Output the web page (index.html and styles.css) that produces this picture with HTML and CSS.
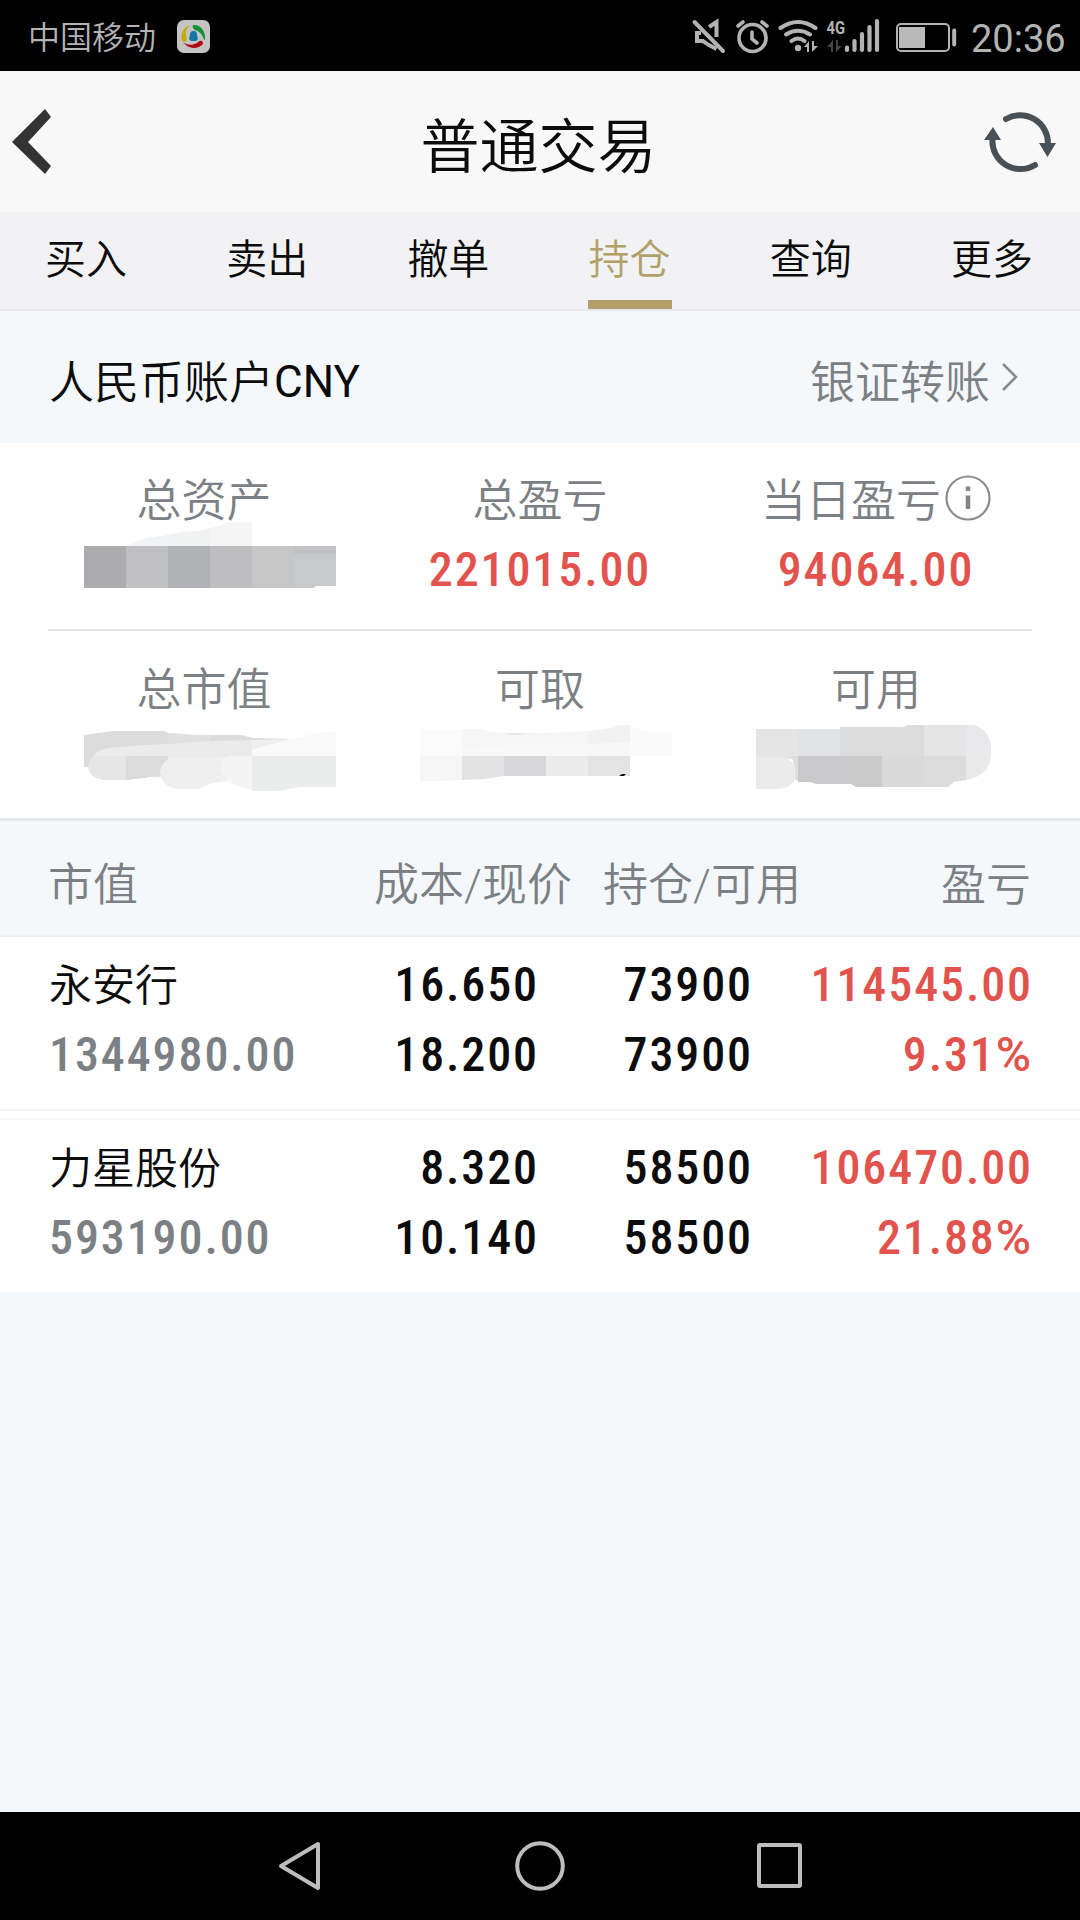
FILE: index.html
```html
<!DOCTYPE html>
<html lang="zh">
<head>
  <meta charset="UTF-8" />
  <title>普通交易</title>
  <link rel="stylesheet" href="styles.css">
</head>
<body>
  <!-- 状态栏 -->
  <div class="status-bar">
    <span class="carrier">中国移动</span>
    <svg class="app-icon" width="33" height="33" viewBox="0 0 33 33">
      <rect width="33" height="33" rx="7" fill="#c4c4c4" />
      <path d="M14 5C7 6 3 13 5 21C9 23 11 20 9 16C8 11 10 7 14 5Z" fill="#c9a800" />
      <path d="M16 5C24 4 29 12 28 20C26 20 26 12 18 10C16 9 15 7 16 5Z" fill="#17903a" />
      <path d="M6 22C11 29 20 30 26 24C26 20 23 20 20 23C15 26 10 25 6 22Z" fill="#b5000f" />
      <path d="M16.500 11C13.500 11 13 13.500 13 15L12 19L13 20L14 21H19L21 19L20 15C20 13 19.500 11 16.500 11Z" fill="#1477a8" />
    </svg>
    <svg class="status-icons" width="270" height="40" viewBox="690 16 270 40" fill="none" stroke="#b3b3b3">
      <!-- 静音 -->
      <g stroke-width="4">
        <path d="M694.500 22L723 51" stroke-linecap="round" />
        <path d="M709 27L716.500 22V37M707 44L703 41H697V33H701M707 44L716.500 49" />
      </g>
      <!-- 闹钟 -->
      <g stroke-width="3.600" stroke-linecap="round">
        <circle cx="752.500" cy="38" r="13.500" />
        <path d="M752 32V39L757 43M738 26L743 22M767 26L762 22" />
      </g>
      <!-- WiFi -->
      <g stroke-width="4" stroke-linecap="round">
        <path d="M780.500 28Q798 16 815.500 28M786 34.500Q798 27 810 34.500M791.500 41Q798 36 804.500 41" />
        <circle cx="798" cy="48" r="3.200" fill="#b3b3b3" stroke="none" />
      </g>
      <path d="M804 47L809 41V52H807V47ZM818 46L812 52V41H814V46Z" fill="#b3b3b3" stroke="none" />
      <!-- 信号 -->
      <path d="M827 47L833 40V52H831V47ZM842 46L836 52V40H838V46Z" fill="#444" stroke="none" />
      <path d="M847 47.500V50M854.500 41V50M862 34V50M869.500 27V50M877 21V50" stroke-width="4.200" stroke-linecap="round" />
      <text class="net-type" x="826.500" y="34" textLength="18.500" lengthAdjust="spacingAndGlyphs">4G</text>
      <!-- 电池 -->
      <rect x="897" y="24" width="52" height="27" rx="4" stroke-width="2" />
      <rect x="899" y="27" width="26" height="21" fill="#b9b9b9" stroke="none" />
      <path d="M954.200 30.500V44.500" stroke-width="4" stroke-linecap="round" />
    </svg>
    <span class="clock">20:36</span>
  </div>

  <div class="header">
    <svg class="back" width="40" height="66" viewBox="0 0 40 66">
      <path d="M33 0L39 8L16 33L39 57L33 65L0 33Z" fill="#333" />
    </svg>
    <h1>普通交易</h1>
    <svg class="refresh" width="74" height="64" viewBox="983 110 74 64">
      <path d="M1006 119A28 28 0 0 1 1048 144M1035 165A28 28 0 0 1 992.500 139" fill="none" stroke="#485158" stroke-width="6" stroke-linecap="round" />
      <path d="M1039 143H1056L1047.500 157ZM984 140H1001L993 127Z" fill="#485158" />
    </svg>
  </div>

  <div class="tabs">
    <a class="tab">买入</a>
    <a class="tab">卖出</a>
    <a class="tab">撤单</a>
    <a class="tab active">持仓</a>
    <a class="tab">查询</a>
    <a class="tab">更多</a>
  </div>

  <div class="account">
    <span class="account-name">人民币账户<span class="currency">CNY</span></span>
    <a class="transfer">银证转账
      <svg width="17" height="30" viewBox="0 0 17 30">
        <path d="M2 2L15 15L2 28" fill="none" stroke="#858b90" stroke-width="2.500" />
      </svg>
    </a>
  </div>

  <!-- 资产汇总 -->
  <div class="summary first">
    <div class="item">
      <div class="label">总资产</div>
      <svg class="mosaic" width="264" height="70" viewBox="-12 0 264 70">
        <path d="M42 12L62 4L84 1V12Z" fill="#f1f4f4" />
        <path d="M84 1L98 -2L115 -3L126 -6V12H84Z" fill="#f0f1f1" />
        <path d="M126 -6L136 -8L142 -12H168V12H126Z" fill="#f5f5f5" />
        <rect x="0" y="12" width="42" height="42" fill="#acacae" />
        <rect x="42" y="12" width="42" height="42" fill="#c0c0c2" />
        <rect x="84" y="12" width="42" height="42" fill="#b1b2b5" />
        <rect x="126" y="12" width="42" height="42" fill="#bebec0" />
        <rect x="168" y="12" width="42" height="42" fill="#c6c6c6" />
        <path d="M210 12H252V52H232L230 54H210Z" fill="#c8c9cd" />
        <rect x="210" y="12" width="42" height="8" fill="#c0c1c5" />
      </svg>
    </div>
    <div class="item">
      <div class="label">总盈亏</div>
      <div class="num red">221015.00</div>
    </div>
    <div class="item">
      <div class="label">当日盈亏<svg class="info" width="46" height="46" viewBox="0 0 46 46">
          <circle cx="23" cy="23" r="21.500" fill="none" stroke="#8c8c8c" stroke-width="2.200" />
          <path d="M23 11.500V16M23 20.500V34" stroke="#858585" stroke-width="4.500" />
        </svg></div>
      <div class="num red">94064.00</div>
    </div>
  </div>
  <div class="summary second">
    <div class="item">
      <div class="label">总市值</div>
      <svg class="mosaic" width="264" height="70" viewBox="-12 0 264 70">
        <path d="M0 12L28 8H80L84 10L110 12H158L168 15L205 16V33H84V53L66 54L42 57V44H0Z" fill="#dcdcdd" />
        <path d="M84 10L110 12H126V33H84Z" fill="#e0e0e1" />
        <path d="M5 44Q7 27 25 25L60 22L84 21L126 18L168 17V33L5 44Z" fill="#ebebec" />
        <path d="M168 26L205 16L226 12L234 10L252 8V33H168Z" fill="#f9f9f9" />
        <path d="M168 17L205 16L168 26Z" fill="#efefef" />
        <path d="M4 45Q5 35 10 33H42V57H18Q6 54 4 45Z" fill="#e6e6e6" />
        <path d="M42 33H84V53L66 54L42 57Z" fill="#dbdbdb" />
        <path d="M76 50Q77 35 94 34H144V58L128 60L120 64Q116 66 110 66H92Q77 62 76 50Z" fill="#efefef" />
        <path d="M136 45Q138 34 145 33H168V67Q140 62 136 45Z" fill="#f4f4f4" />
        <path d="M168 33H252V64H216L194 68H168Z" fill="#ebecec" />
      </svg>
    </div>
    <div class="item">
      <div class="label">可取</div>
      <svg class="mosaic" width="264" height="70" viewBox="-12 0 264 70">
        <path d="M0 6H42V33H0Z" fill="#fbfbfb" />
        <path d="M42 6H60L72 9L84 10H126L168 8V33H42Z" fill="#f6f6f6" />
        <path d="M84 10H110L100 12H90Z" fill="#e9e9e9" />
        <path d="M168 8L190 5L200 2H210V33H168Z" fill="#f2f2f2" />
        <path d="M210 3Q219 4 221 8H252V33H210Z" fill="#fafafa" />
        <path d="M0 26L70 23L168 21L210 19V33H0Z" fill="#fafafa" opacity=".7" />
        <path d="M0 33H42V57L20 58H0Z" fill="#f6f6f6" />
        <path d="M42 33H84V53L64 56L42 57Z" fill="#e3e3e3" />
        <rect x="84" y="33" width="42" height="20" fill="#d7d7da" />
        <rect x="126" y="33" width="42" height="20" fill="#ececec" />
        <rect x="168" y="33" width="42" height="20" fill="#e4e4e4" />
        <path d="M202 51H206L204 53H199Z" fill="#111" />
      </svg>
    </div>
    <div class="item">
      <div class="label">可用</div>
      <svg class="mosaic" width="264" height="70" viewBox="-12 0 264 70">
        <rect x="0" y="6" width="42" height="30" fill="#e5e5e5" />
        <rect x="42" y="6" width="42" height="27" fill="#e2e3e5" />
        <path d="M84 4H147L152 2H168V33H84Z" fill="#dcdcdc" />
        <rect x="168" y="2" width="42" height="31" fill="#e5e5e5" />
        <path d="M210 2H217Q232 5 235 22V33H210Z" fill="#e9e9eb" />
        <path d="M0 34H26Q40 37 40 50Q39 64 24 66H0Z" fill="#ebebeb" />
        <path d="M34 33H42V58L39 57Q41 42 34 33Z" fill="#dedede" />
        <path d="M42 33H84V61H60L54 59H42Z" fill="#c9c9cb" />
        <path d="M84 33H126V64H100L95 61H84Z" fill="#cacaca" />
        <rect x="126" y="33" width="42" height="31" fill="#dadada" />
        <path d="M168 33H210V57L198 59L192 64H168Z" fill="#dcdcdc" />
        <path d="M210 33H235Q233 53 210 57Z" fill="#e9e9e9" />
      </svg>
    </div>
  </div>

  <!-- 持仓列表 -->
  <div class="list-head">
    <span>市值</span>
    <span>成本/现价</span>
    <span>持仓/可用</span>
    <span>盈亏</span>
  </div>
  <div class="stock">
    <div class="name">永安行</div>
    <div class="num">16.650</div>
    <div class="num">73900</div>
    <div class="num red">114545.00</div>
    <div class="num gray">1344980.00</div>
    <div class="num">18.200</div>
    <div class="num">73900</div>
    <div class="num red">9.31<span class="percent">%</span></div>
  </div>
  <div class="gap"></div>
  <div class="stock">
    <div class="name">力星股份</div>
    <div class="num">8.320</div>
    <div class="num">58500</div>
    <div class="num red">106470.00</div>
    <div class="num gray">593190.00</div>
    <div class="num">10.140</div>
    <div class="num">58500</div>
    <div class="num red">21.88<span class="percent">%</span></div>
  </div>

  <!-- 导航键 -->
  <div class="nav-bar">
    <svg width="54" height="54" viewBox="0 0 54 54"><path d="M8 27L45 5V49Z" /></svg>
    <svg width="54" height="54" viewBox="0 0 54 54"><circle cx="27" cy="27" r="22.800" /></svg>
    <svg width="54" height="54" viewBox="0 0 54 54"><rect x="6" y="6" width="41" height="41" rx="1" /></svg>
  </div>
</body>
</html>
```
FILE: styles.css
```css
* {
  box-sizing: border-box;
}
body {
  margin: 0;
  width: 1080px;
  height: 1920px;
  display: flex;
  flex-direction: column;
  background: #f4f8fb;
  color: #0c0c0c;
  font-family: Roboto, "Noto Sans CJK SC", sans-serif;
  font-weight: 350;
  overflow: hidden;
}
svg {
  display: block;
  flex-shrink: 0;
}
.status-bar {
  height: 71px;
  padding: 0 12px 0 28px;
  display: flex;
  align-items: center;
  background: #000;
  color: #b3b3b3;
}
.carrier {
  font-size: 32px;
  line-height: 70px;
  padding-top: 4px;
}
.app-icon {
  margin-left: 21px;
  margin-top: 2px;
}
.status-icons {
  margin-left: auto;
}
.net-type {
  font-size: 19px;
  font-weight: 700;
  fill: #b3b3b3;
  stroke: none;
}
.clock {
  width: 97px;
  margin-left: 11px;
  font-size: 38px;
  font-weight: 400;
  line-height: 70px;
  padding-top: 6px;
}
.header {
  height: 141px;
  padding: 0 23px 0 12px;
  display: flex;
  align-items: center;
  justify-content: space-between;
  background: #f8f8f8;
}
.header h1 {
  margin: 0;
  padding: 12px 0 0 42px;
  font-size: 59px;
  font-weight: 350;
  line-height: 80px;
}
.tabs {
  height: 99px;
  padding: 0 46px 0 44px;
  display: flex;
  justify-content: space-between;
  background: #f2f2f4;
  border-bottom: 2px solid #e6e8ec;
}
.tab {
  width: 84px;
  height: 97px;
  font-size: 41px;
  line-height: 97px;
  text-align: center;
}
.tab.active {
  color: #b1a168;
  border-bottom: 9px solid #b1a168;
}
.account {
  height: 132px;
  padding: 4px 62px 0 49px;
  display: flex;
  align-items: center;
  justify-content: space-between;
  font-size: 45px;
}
.currency {
  font-size: 44px;
  font-weight: 400;
  vertical-align: 2px;
}
.transfer {
  display: flex;
  align-items: center;
  gap: 11px;
  color: #7b8084;
}
.transfer svg {
  margin-top: -4px;
}
.summary {
  padding: 0 36px;
  display: grid;
  grid-template-columns: repeat(3, 336px);
  background: #fff;
}
.summary.first {
  height: 188px;
  padding-top: 21px;
  background: linear-gradient(#e4e5e7, #e4e5e7) center bottom / 984px 2px no-repeat #fff;
}
.summary.second {
  height: 190px;
  padding-top: 22px;
  border-bottom: 3px solid #e5e7e9;
}
.item {
  display: flex;
  flex-direction: column;
  align-items: center;
}
.label {
  display: flex;
  align-items: center;
  height: 70px;
  font-size: 45px;
  line-height: 70px;
  padding-top: 5px;
  color: #7b8084;
}
.info {
  margin: -8px 0 0 4px;
}
.mosaic {
  overflow: visible;
}
.num {
  font-size: 48px;
  font-weight: 500;
  font-stretch: 85%;
  line-height: 72px;
  letter-spacing: 1.900px;
}
.red {
  color: #e2534d;
}
.gray {
  color: #7b8084;
}
.percent {
  font-stretch: 100%;
}
.list-head {
  height: 116px;
  padding-left: 48px;
  display: grid;
  grid-template-columns: 301px 223px 229px 230px;
  font-size: 45px;
  line-height: 130px;
  color: #7b8084;
  border-bottom: 2px solid #eef1f5;
  text-align: right;
}
.list-head span:first-child {
  text-align: left;
}
.stock {
  height: 172px;
  padding: 12px 0 0 49px;
  display: grid;
  grid-template-columns: 300px 190px 214px 280px;
  grid-auto-rows: 70px;
  background: #fff;
  text-align: right;
}
.stock > :nth-child(4n + 1) {
  text-align: left;
}
.name {
  font-size: 43px;
  line-height: 75px;
}
.gap {
  height: 11px;
  background: #fff;
  border-top: 2px solid #f3f7fb;
  border-bottom: 2px solid #f6f7f8;
}
.nav-bar {
  height: 108px;
  margin-top: auto;
  padding: 0 273px;
  display: flex;
  align-items: center;
  justify-content: space-between;
  background: #000;
}
.nav-bar svg {
  fill: none;
  stroke: #bdbdbd;
  stroke-width: 4px;
  stroke-linejoin: round;
}
```
